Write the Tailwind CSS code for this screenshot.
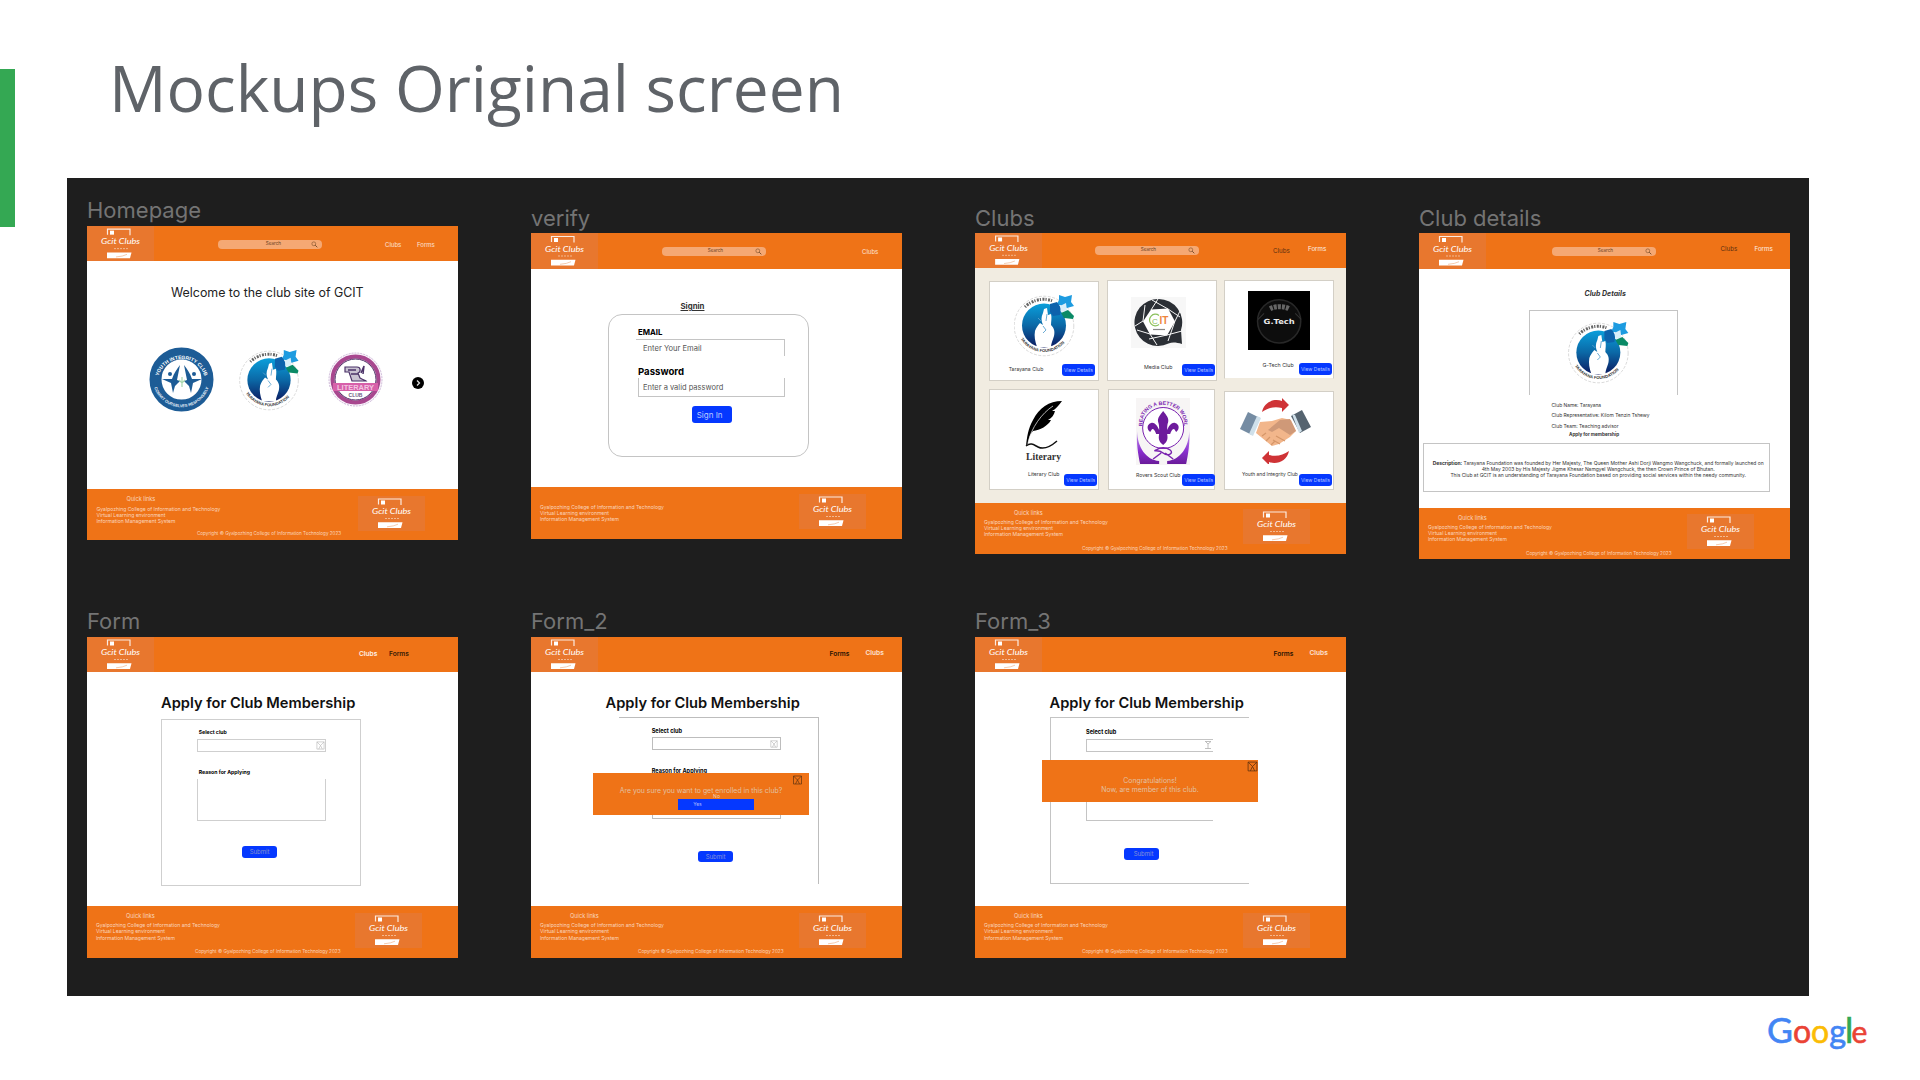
<!DOCTYPE html>
<html lang="en">
<head>
<meta charset="utf-8">
<title>Mockups Original screen</title>
<script src="https://cdn.jsdelivr.net/npm/@tailwindcss/browser@4"></script>
</head>
<body class="bg-white">
<!-- shared artwork -->
<svg class="absolute size-0" aria-hidden="true">
  <defs>
    <linearGradient id="sky" x1="0" y1="0" x2="0" y2="1"><stop offset="0" stop-color="#0a9fdb"/><stop offset=".5" stop-color="#0b68a6"/><stop offset="1" stop-color="#0b1a60"/></linearGradient>
    <linearGradient id="violet" x1="0" y1="0" x2="0" y2="1"><stop offset="0" stop-color="#c9a2ee"/><stop offset=".6" stop-color="#8a2fd0"/><stop offset="1" stop-color="#6a1b9a"/></linearGradient>
    <symbol id="brand" viewBox="0 0 67 35">
      <path d="M20.500 8.500V3H43v6" fill="none" stroke="#fff" stroke-opacity=".85" stroke-width="1.200"/>
      <rect x="23" y="4.500" width="4" height="4" fill="#fff"/>
      <text x="14" y="18" font-family="Lato" font-style="italic" font-weight="400" font-size="8.400" fill="#fff" textLength="39" lengthAdjust="spacingAndGlyphs">Gcit Clubs</text>
      <path d="M27 22.500h15" stroke="#f6c9a8" stroke-width=".8" stroke-dasharray="2 1"/>
      <path d="M20 26.300h24.500l-1.500 5.700H20z" fill="#fff"/>
      <path d="M29 30.800q7-.5 11-2.600" fill="none" stroke="#f0b58c" stroke-width=".7"/>
    </symbol>
    <symbol id="lens" viewBox="0 0 8 8"><circle cx="3.200" cy="3.200" r="2.200" fill="none" stroke="#8a5a34" stroke-width=".8"/><path d="M4.800 4.800l2.400 2.400" stroke="#6b4424" stroke-width="1"/></symbol>
    <symbol id="tarayana" viewBox="0 0 61 63">
      <circle cx="30" cy="32" r="29.800" fill="#fff" stroke="#b5b5b5" stroke-width=".5" stroke-dasharray="3 1.500"/>
      <circle cx="30" cy="31.500" r="22" fill="url(#sky)"/>
      <path d="M23 53c-2-6-3-11-2-16 1-3 3-6 5-8l3 2c-2-4-2-8 0-12l1-4 3-1 1 7 3-1c1 4 0 7 0 11 3 3 4 6 3 11-1 4-3 7-3 11z" fill="#fff"/>
      <path d="M24 24l3 3M29 32l3 4-3 3M33 20l-1 7" fill="none" stroke="#5ba3cf" stroke-width=".9"/>
      <path d="M45 1l6 2 7-2-1 7 3 4-7 2-7-3-4 1 3-6z" fill="#1d9be0"/>
      <path d="M36 10l7-2 4 6-1 7-7 1-3-4z" fill="#0d62ac"/>
      <path d="M46 12l6-3 1 8-6 1z" fill="#d9eefa"/>
      <path d="M47 19l7-3 6 6-1 3-9-1z" fill="#0a8a66"/>
      <path id="tb" d="M6.500 45a27.500 27.500 0 0 0 48-2" fill="none"/>
      <text font-family="Liberation Sans" font-weight="700" font-size="4.200" fill="#333"><textPath href="#tb">TARAYANA FOUNDATION</textPath></text>
      <path d="M11 13A26.500 26.500 0 0 1 39 7" fill="none" stroke="#666" stroke-width="3" stroke-dasharray="1.200 1.400 2 1"/>
    </symbol>
    <symbol id="mail" viewBox="0 0 10 10"><path d="M1 1h8v8H1zM1 1l4 4 4-4M3 9l2-4 2 4" fill="none" stroke="currentColor" stroke-width=".7"/></symbol>
  </defs>
</svg>

<div class="flex h-[1080px] w-[1920px] flex-col overflow-hidden">
  <header class="flex h-[178px] shrink-0 items-start">
    <div class="mt-[69px] h-[158px] w-[15px] shrink-0 bg-[#34a853]"></div>
    <h1 class="ml-[94px] mt-[44px] whitespace-nowrap font-['Open_Sans'] text-[64px] leading-[88px] text-[#5f6368]">Mockups Original screen</h1>
  </header>

  <!-- design canvas with free-placed artboards -->
  <main class="relative ml-[67px] h-[817.5px] w-[1741.5px] shrink-0 overflow-hidden bg-[#1e1e1e] font-['Inter'] text-black">

    <!-- Homepage -->
    <section class="absolute left-[20px] top-[21px] w-[371px] whitespace-nowrap">
      <h2 class="h-[27px] text-[22px] leading-[22px] text-[#747474]">Homepage</h2>
      <div class="flex h-[35.3px] items-center bg-[#ef7317] text-[6px] text-white/80">
        <svg class="h-full w-[67px] shrink-0 bg-[#e8772e]"><use href="#brand"/></svg>
        <div class="ml-[64px] mt-[2px] flex h-[9.5px] w-[104px] items-center justify-end rounded-[4px] bg-[#f5a873] pr-[4px] text-[4.6px] text-[#6b4424]"><span class="mr-[30px]">Search</span><svg class="size-[7px]"><use href="#lens"/></svg></div>
        <span class="ml-[63px] mt-[2px] w-[18px]">Clubs</span><span class="ml-[14px] mt-[2px]">Forms</span>
      </div>
      <div class="flex h-[228px] flex-col bg-white">
        <h3 class="ml-[84px] mt-[24px] text-[12.4px] leading-[16px] text-[#222]">Welcome to the club site of GCIT</h3>
        <div class="ml-[62px] mt-[46px] flex items-center">
          <svg class="size-[65px]" viewBox="0 0 65 65">
            <circle cx="32.500" cy="32.500" r="26" fill="#fff" stroke="#1d5c96" stroke-width="12"/>
            <path id="ya" d="M8.500 36a24 24 0 1 1 48 0" fill="none"/><path id="yb" d="M4.500 37a28.500 28.500 0 0 0 56 0" fill="none"/>
            <text font-family="Liberation Sans" font-weight="700" font-size="5" fill="#fff"><textPath href="#ya" startOffset="50%" text-anchor="middle">YOUTH INTEGRITY CLUB</textPath></text>
            <text font-family="Liberation Sans" font-weight="700" font-size="4" fill="#e4edf6"><textPath href="#yb" startOffset="50%" text-anchor="middle">COMMIT OURSELVES RESPONSIBLY</textPath></text>
            <path d="M31 18c-3 4-6 8-8 14l-10 0 9 4 2 10 2-7 5-5-3-1zM35 18c3 4 6 8 8 14l10 0-9 4-2 10-2-7-5-5 3-1z" fill="#1d5c96"/>
            <circle cx="21" cy="27" r="2" fill="#1d5c96"/><circle cx="45" cy="27" r="2" fill="#1d5c96"/>
            <path d="M33 30v10M30 33l3 3 3-3" stroke="#a8d8ae" stroke-width="1.200" fill="none"/>
          </svg>
          <svg class="ml-[25px] h-[62px] w-[61px]"><use href="#tarayana"/></svg>
          <svg class="ml-[28px] size-[55px]" viewBox="0 0 55 55">
            <circle cx="27.500" cy="27.500" r="26.500" fill="#faf5fb" stroke="#cdb8d8" stroke-width="1" stroke-dasharray="2 1"/>
            <circle cx="27.500" cy="27.500" r="23" fill="#fff" stroke="#a8478f" stroke-width="4"/>
            <circle cx="27.500" cy="27.500" r="20.500" fill="none" stroke="#4d2c63" stroke-width="1"/>
            <path d="M17 15h12c4 0 4 5 1 6l2 5c3 2 5 2 6 3H24l-3-9h-4z" fill="#c9c2d2" stroke="#4b3268" stroke-width="1.200"/><path d="M33 21l3-7-1 8M20 18h8M23 22h7" fill="none" stroke="#4b3268" stroke-width="1.500"/>
            <path d="M5 31h45v8H5z" fill="#d760a9"/>
            <text x="27.500" y="38" text-anchor="middle" font-family="Liberation Sans" font-weight="700" font-size="8" fill="#f3c4e1" textLength="37" lengthAdjust="spacingAndGlyphs">LITERARY</text>
            <text x="27.500" y="45" text-anchor="middle" font-family="Liberation Sans" font-weight="700" font-size="5" fill="#6e5a80">CLUB</text>
          </svg>
          <svg class="ml-[28.500px] mt-[7px] size-[12px]" viewBox="0 0 12 12"><circle cx="6" cy="6" r="6"/><path d="M5 3.500L7.500 6 5 8.500" fill="none" stroke="#ddd" stroke-width="1.300"/></svg>
        </div>
      </div>
      <div class="h-[51px] bg-[#ef7317] text-[5.05px] leading-[6.2px] text-white/70">
        <div class="flex h-[42px] items-start">
          <div class="w-[271px] pl-[9.500px] pt-[7px]"><p class="ml-[30px] pb-[3px] text-[5.6px]">Quick links</p><p>Gyalpozhing College of Information and Technology</p><p>Virtual Learning environment</p><p>Information Management System</p></div>
          <svg class="mt-[6.500px] h-[35px] w-[67px] bg-[#e8772e]"><use href="#brand"/></svg>
        </div>
        <p class="ml-[110px] text-[4.6px]">Copyright © Gyalpozhing College of Information Technology 2023</p>
      </div>
    </section>

    <!-- verify -->
    <section class="absolute left-[464px] top-[29px] w-[370.7px] whitespace-nowrap">
      <h2 class="h-[26px] text-[22px] leading-[22px] text-[#747474]">verify</h2>
      <div class="flex h-[36px] items-center bg-[#ef7317] text-[6px] text-white/80">
        <svg class="h-full w-[67px] shrink-0 bg-[#e8772e]"><use href="#brand"/></svg>
        <div class="ml-[64px] mt-px flex h-[9.5px] w-[104px] items-center justify-end rounded-[4px] bg-[#f5a873] pr-[4px] text-[4.6px] text-[#6b4424]"><span class="mr-[32px]">Search</span><svg class="size-[7px]"><use href="#lens"/></svg></div>
        <span class="ml-[96px]">Clubs</span>
      </div>
      <div class="flex h-[218px] flex-col bg-white">
        <h3 class="ml-[149.500px] mt-[32px] text-[7.8px] font-bold leading-[10px] text-[#333] underline">Signin</h3>
        <div class="ml-[77px] mt-[3px] flex h-[143px] w-[201px] flex-col items-start rounded-[14px] border border-[#c4c4c4]">
          <p class="ml-[29px] mt-[13px] text-[7.8px] font-bold leading-[8px]">EMAIL</p>
          <div class="ml-[27px] mt-[3px] flex h-[17px] w-[149px] items-center border-r border-t border-[#c4c4c4] pl-[7px] pt-[2px] text-[7.6px] text-[#555]">Enter Your Email</div>
          <p class="ml-[29px] mt-[11px] text-[9.6px] font-bold leading-[10px]">Password</p>
          <div class="ml-[29px] mt-[1px] flex h-[19px] w-[147px] items-center border-x border-b border-[#c4c4c4] pl-[4px] pt-px text-[7.5px] text-[#555]">Enter a valid password</div>
          <div class="ml-[82.700px] mt-[9px] flex h-[17px] w-[40.5px] items-center rounded-[3px] bg-[#0538ff] pl-[5px] text-[8px] text-[#bccaff]">Sign In</div>
        </div>
      </div>
      <div class="h-[52.300px] bg-[#ef7317] text-[5.05px] leading-[6.2px] text-white/70">
        <div class="flex items-start">
          <div class="w-[268px] pl-[9px] pt-[16.500px]"><p>Gyalpozhing College of Information and Technology</p><p>Virtual Learning environment</p><p>Information Management System</p></div>
          <svg class="mt-[6.500px] h-[35px] w-[67px] bg-[#e8772e]"><use href="#brand"/></svg>
        </div>
      </div>
    </section>

    <!-- Clubs -->
    <section class="absolute left-[908px] top-[29px] w-[371px] whitespace-nowrap">
      <h2 class="h-[26.300px] text-[22px] leading-[22px] text-[#747474]">Clubs</h2>
      <div class="flex h-[34.700px] items-center bg-[#ef7317] text-[6.2px] text-white/90">
        <svg class="h-full w-[67px] shrink-0 bg-[#e8772e]"><use href="#brand"/></svg>
        <div class="ml-[53px] flex h-[9.5px] w-[104px] items-center justify-end rounded-[4px] bg-[#f5a873] pr-[4px] text-[4.6px] text-[#6b4424]"><span class="mr-[32px]">Search</span><svg class="size-[7px]"><use href="#lens"/></svg></div>
        <span class="ml-[74px] w-[19px] text-[#5c2f10]">Clubs</span><span class="ml-[16px] pb-[3px]">Forms</span>
      </div>
      <div class="flex h-[234.700px] flex-col bg-[#f1ece1] pl-[13.700px] pt-[12.300px] text-[5px] leading-[6px] text-[#333]">
        <div class="flex h-[108.700px] items-start">
          <div class="mt-[1px] h-[100px] w-[110px] border border-[#d3cfc6] bg-white">
            <svg class="ml-[24.300px] mt-[11.300px] h-[63px] w-[61px]"><use href="#tarayana"/></svg>
            <div class="mt-[7.300px] flex items-start"><span class="ml-[19px] mt-[2.500px] w-[34px] text-[5.100px]">Tarayana Club</span><span class="ml-[19px] h-[12px] w-[33.500px] shrink-0 rounded-[3px] bg-[#0538ff] text-center leading-[13px] text-[#b4c3ff]">View Details</span></div>
          </div>
          <div class="ml-[8px] h-[101px] w-[110.600px] border border-[#d3cfc6] bg-white">
            <svg class="ml-[23px] mt-[15.400px] h-[51px] w-[55px] bg-[#f7f7f7]" viewBox="0 0 55 51">
              <path d="M27.500 2a23.500 23.500 0 1 0 10 44.500c4-1.500 8-1 13.500.5l-1-14A23.500 23.500 0 0 0 27.500 2z" fill="#2b2f35"/>
              <path d="M20 12.500l17-1 7 13-8 14-17-1-7-13z" fill="#fff"/>
              <path d="M20 13l7-11M37 12l12 8M44 24l-7 20M36 38l-18 4M19 37L6 33M12 24L14 8M37 12L21 3M44 24l6-12M36 38l15-4M19 37l7 11M12 24L4 29" stroke="#f7f7f7" stroke-width="1"/>
              <path d="M28 18.500a5.800 5.800 0 1 0 0 9" fill="none" stroke="#8ac05b" stroke-width="1.200"/>
              <text x="21" y="26.500" font-family="Liberation Sans" font-size="8" fill="#8ac05b">C</text>
              <text x="28.500" y="27" font-family="Liberation Sans" font-weight="700" font-size="10" fill="#ee8540">IT</text>
              <path d="M22 32.500h12" stroke="#888" stroke-width="1.200"/>
            </svg>
            <div class="mt-[16.600px] flex items-start"><span class="ml-[36.300px] w-[28px] text-[5.3px]">Media Club</span><span class="ml-[10px] h-[12px] w-[33.500px] shrink-0 rounded-[3px] bg-[#0538ff] text-center leading-[13px] text-[#b4c3ff]">View Details</span></div>
          </div>
          <div class="ml-[7px] h-[99px] w-[109.700px] border border-[#d3cfc6] border-b-[#f1ece1] bg-white">
            <svg class="ml-[22.400px] mt-[9.700px] h-[58.700px] w-[62.300px] bg-black" viewBox="0 0 62 58">
              <circle cx="31" cy="30" r="21.500" fill="#0d0d0d" stroke="#282828" stroke-width="1.500"/>
              <path d="M22 17.500a14 8 0 0 1 19 0" fill="none" stroke="#666" stroke-width="5" stroke-dasharray="3 1"/>
              <path d="M16 22l-6 6M47 22l6 6" stroke="#333"/>
              <text x="31" y="33" text-anchor="middle" font-family="DejaVu Sans" font-weight="700" font-size="7" fill="#e8e8e8" textLength="31" lengthAdjust="spacingAndGlyphs">G.Tech</text>
            </svg>
            <div class="mt-[13px] flex items-start"><span class="-mt-[1px] ml-[37.200px] w-[30px] text-[5.3px]">G-Tech Club</span><span class="ml-[6.200px] h-[12px] w-[33.500px] shrink-0 rounded-[3px] bg-[#0538ff] text-center leading-[13px] text-[#b4c3ff]">View Details</span></div>
          </div>
        </div>
        <div class="flex items-start">
          <div class="h-[100.600px] w-[110px] border border-[#d3cfc6] bg-white">
            <svg class="ml-[35.300px] mt-[10px] h-[64px] w-[38px] overflow-visible" viewBox="0 0 38 64">
              <path d="M37 1C24 1 14 8 8 20 3 29 2 37 1 46l2-3c1-5 2-9 5-12 7-1 15-5 18-11l-3 0c4-2 6-5 7-9l-3 0c4-2 7-6 10-10z" fill="#000"/>
              <path d="M3 43C6 28 17 13 28 6" fill="none" stroke="#fff" stroke-width=".7"/>
              <path d="M1 46c5-4 8-1 12 1s11 1 19-6" fill="none" stroke="#111" stroke-width="1.500"/>
              <text x="1" y="60" font-family="Liberation Serif" font-weight="700" font-size="11" fill="#333" textLength="35" lengthAdjust="spacingAndGlyphs">Literary</text>
            </svg>
            <div class="mt-[10.300px] flex items-start"><span class="-mt-[3.600px] ml-[38.300px] w-[32px] text-[5.2px]">Literary Club</span><span class="ml-[4px] h-[12px] w-[33.500px] shrink-0 rounded-[3px] bg-[#0538ff] text-center leading-[13px] text-[#b4c3ff]">View Details</span></div>
          </div>
          <div class="ml-[9.600px] h-[100.600px] w-[107px] border border-[#d3cfc6] bg-white">
            <svg class="ml-[26.400px] mt-[8.300px] h-[67px] w-[54.300px] overflow-visible bg-[#f7f5f5]" viewBox="0 0 54 67">
              <path id="sc" d="M6.500 29C3-.500 51-.500 47.500 29" fill="none"/>
              <text font-family="Liberation Sans" font-weight="700" font-size="5.200" fill="#7a22b0"><textPath href="#sc" startOffset="50%" text-anchor="middle">CREATING A BETTER WORLD</textPath></text>
              <path d="M1 33c0 16 9 29 22 30v3H4C2 57 0 44 1 33zM53 33c0 16-9 29-22 30v3h19c2-9 4-22 3-33z" fill="url(#violet)"/>
              <circle cx="27" cy="30" r="20.500" fill="#fff" stroke="#7a22b0" stroke-width="1"/>
              <path d="M27 13c3 4 6 7 5 11-1 3-1 5-1 8 2-5 5-8 8-7 4 1 5 6 1 9l-2-3c-2 0-3 2-4 5h-3c1 5 0 8-4 11-4-3-5-6-4-11h-3c-1-3-2-5-4-5l-2 3c-4-3-3-8 1-9 3-1 6 2 8 7 0-3 0-5-1-8-1-4 2-7 5-11z" fill="#6d1b9c"/>
              <path d="M20 52c4-3 10-3 14 0s-2 7-7 3-11-1-7-3zM17 61l8-6M37 61l-8-6" fill="none" stroke="#7a22b0" stroke-width="1.500"/>
            </svg>
            <div class="mt-[9px] flex items-start"><span class="-mt-[2.300px] ml-[26.700px] w-[43px] text-[5.100px]">Rovers Scout Club</span><span class="ml-[3px] h-[12px] w-[33.500px] shrink-0 rounded-[3px] bg-[#0538ff] text-center leading-[13px] text-[#b4c3ff]">View Details</span></div>
          </div>
          <div class="ml-[9px] mt-[1.700px] h-[99px] w-[109.500px] border border-[#d3cfc6] bg-white">
            <svg class="ml-[14.700px] mt-[6px] h-[66.600px] w-[70.700px]" viewBox="0 0 70.700 66.600">
              <path d="M22 14C24 4 34 0 42 3l0-3 7 7-7 7v-4c-8-2-14 0-20 4z" fill="#cf3336"/>
              <path d="M49 53c-2 10-12 14-20 11v3l-7-7 7-7v4c8 2 14 0 20-4z" fill="#cf3336"/>
              <path d="M8 14l12 6-8 17-12-6z" fill="#758ca3"/><path d="M17 18l4 2-8 18-4-2z" fill="#cfe0ea"/>
              <path d="M62 12l9 17-11 6-9-17z" fill="#55636f"/><path d="M52 16l3 1 7 16-3 2z" fill="#cfe0ea"/>
              <path d="M20 24l12-1 10-3 9 2 5 11-6 6-11 7-7 2-16-13z" fill="#f2b68b"/>
              <path d="M28 32l12-10 10-1 6 12-6 4-11-7-7 4z" fill="#cf9978"/>
              <path d="M22 38l4-3M26 43l4-4M31 47l4-4M36 38l9 5M33 42l7 4" stroke="#d59669" stroke-width="1.200"/>
            </svg>
            <div class="mt-[10px] flex items-start"><span class="-mt-[3.600px] ml-[16.700px] w-[56px] text-[4.9px]">Youth and Integrity Club</span><span class="ml-[.7px] h-[12px] w-[33.500px] shrink-0 rounded-[3px] bg-[#0538ff] text-center leading-[13px] text-[#b4c3ff]">View Details</span></div>
          </div>
        </div>
      </div>
      <div class="h-[51.300px] bg-[#ef7317] text-[5.05px] leading-[6.2px] text-white/70">
        <div class="flex h-[42px] items-start">
          <div class="w-[268px] pl-[9px] pt-[7px]"><p class="ml-[30px] pb-[3px] text-[5.6px]">Quick links</p><p>Gyalpozhing College of Information and Technology</p><p>Virtual Learning environment</p><p>Information Management System</p></div>
          <svg class="mt-[6.500px] h-[35px] w-[67px] bg-[#e8772e]"><use href="#brand"/></svg>
        </div>
        <p class="ml-[107px] text-[4.65px]">Copyright © Gyalpozhing College of Information Technology 2023</p>
      </div>
    </section>

    <!-- Club details -->
    <section class="absolute left-[1352px] top-[29px] w-[371px] whitespace-nowrap">
      <h2 class="h-[26.300px] text-[22px] leading-[22px] text-[#747474]">Club details</h2>
      <div class="flex h-[36px] items-center bg-[#ef7317] text-[6.2px] text-white/90">
        <svg class="h-full w-[67px] shrink-0 bg-[#e8772e]"><use href="#brand"/></svg>
        <div class="ml-[66px] flex h-[9.5px] w-[104px] items-center justify-end rounded-[4px] bg-[#f5a873] pr-[4px] text-[4.6px] text-[#6b4424]"><span class="mr-[32px]">Search</span><svg class="size-[7px]"><use href="#lens"/></svg></div>
        <span class="ml-[64.500px] w-[19px] pb-[5px] text-[#5c2f10]">Clubs</span><span class="ml-[15px] pb-[5px]">Forms</span>
      </div>
      <div class="flex h-[238.300px] flex-col items-start bg-white text-[#333]">
        <h3 class="ml-[165.500px] mt-[20.300px] text-[7px] font-bold italic leading-[8px]">Club Details</h3>
        <div class="ml-[110px] mt-[12.700px] h-[85px] w-[149.300px] border-x border-t border-[#c4c4c4]"><svg class="ml-[38.300px] mt-[9.300px] h-[63px] w-[61.700px]"><use href="#tarayana"/></svg></div>
        <div class="ml-[132.500px] mt-[4.400px] text-[4.9px] leading-[10.6px]"><p>Club Name: Tarayana</p><p>Club Representative: Kilom Tenzin Tshewy</p><p>Club Team: Teaching advisor</p></div>
        <p class="ml-[150px] mt-[1px] text-[4.6px] font-bold leading-[6px]">Apply for membership</p>
        <div class="ml-[4px] mt-[4.300px] flex h-[49.300px] w-[347.300px] flex-col items-center justify-center border border-[#c4c4c4] pl-[3px] pt-[4px] text-[4.94px] leading-[6px]">
          <p><b>Description:</b> Tarayana Foundation was founded by Her Majesty, The Queen Mother Ashi Dorji Wangmo Wangchuck, and formally launched on</p>
          <p>4th May 2003 by His Majesty Jigme Khesar Namgyel Wangchuck, the then Crown Prince of Bhutan.</p>
          <p>This Club at GCIT is an understanding of Tarayana Foundation based on providing social services within the needy community.</p>
        </div>
      </div>
      <div class="h-[51.300px] bg-[#ef7317] text-[5.05px] leading-[6.2px] text-white/70">
        <div class="flex h-[42px] items-start">
          <div class="w-[268px] pl-[9px] pt-[7px]"><p class="ml-[30px] pb-[3px] text-[5.6px]">Quick links</p><p>Gyalpozhing College of Information and Technology</p><p>Virtual Learning environment</p><p>Information Management System</p></div>
          <svg class="mt-[6.500px] h-[35px] w-[67px] bg-[#e8772e]"><use href="#brand"/></svg>
        </div>
        <p class="ml-[107px] text-[4.65px]">Copyright © Gyalpozhing College of Information Technology 2023</p>
      </div>
    </section>

    <!-- Form -->
    <section class="absolute left-[20px] top-[432px] w-[371px] whitespace-nowrap">
      <h2 class="h-[27px] text-[22px] leading-[22px] text-[#747474]">Form</h2>
      <div class="flex h-[35px] items-center bg-[#ef7317] text-[6.6px] font-semibold text-white/90">
        <svg class="h-full w-[67px] shrink-0 bg-[#e8772e]"><use href="#brand"/></svg>
        <span class="ml-[205px] w-[19px]">Clubs</span><span class="ml-[11px] text-[#3a1c05]">Forms</span>
      </div>
      <div class="flex h-[234px] flex-col bg-white">
        <h3 class="ml-[74px] mt-[22.500px] text-[14.65px] font-semibold leading-[16px] text-[#111]">Apply for Club Membership</h3>
        <div class="ml-[74px] mt-[8px] flex h-[167.500px] w-[199.500px] flex-col items-start border border-[#cfcfcf] text-[5.2px] font-bold leading-[6px]">
          <p class="ml-[36.700px] mt-[9px]">Select club</p>
          <div class="ml-[34.700px] mt-[4.300px] flex h-[13px] w-[129.700px] items-center justify-end border border-[#cfcfcf] text-[#b9b9b9]"><svg class="size-[9px]"><use href="#mail"/></svg></div>
          <p class="ml-[36.700px] mt-[17px]">Reason for Applying</p>
          <div class="ml-[34.700px] mt-[4px] h-[42.700px] w-[129.700px] border-x border-b border-[#cfcfcf]"></div>
          <div class="ml-[80px] mt-[25px] flex h-[11.600px] w-[35px] items-center justify-center rounded-[3px] bg-[#0538ff] text-[6px] font-normal text-[#8593c9]">Submit</div>
        </div>
      </div>
      <div class="h-[51.700px] bg-[#ef7317] text-[5.05px] leading-[6.2px] text-white/70">
        <div class="flex h-[42px] items-start">
          <div class="w-[268px] pl-[9px] pt-[7px]"><p class="ml-[30px] pb-[3px] text-[5.6px]">Quick links</p><p>Gyalpozhing College of Information and Technology</p><p>Virtual Learning environment</p><p>Information Management System</p></div>
          <svg class="mt-[6.500px] h-[35px] w-[67px] bg-[#e8772e]"><use href="#brand"/></svg>
        </div>
        <p class="ml-[108px] text-[4.65px]">Copyright © Gyalpozhing College of Information Technology 2023</p>
      </div>
    </section>

    <!-- Form_2 -->
    <section class="absolute left-[464px] top-[432px] w-[370.7px] whitespace-nowrap">
      <h2 class="h-[27px] text-[22px] leading-[22px] text-[#747474]">Form_2</h2>
      <div class="flex h-[35px] items-center bg-[#ef7317] text-[6.6px] font-semibold text-white/80">
        <svg class="h-full w-[67px] shrink-0 bg-[#e8772e]"><use href="#brand"/></svg>
        <span class="ml-[231.500px] w-[20px] text-[#2a1403]">Forms</span><span class="ml-[16px] pb-[2px]">Clubs</span>
      </div>
      <div class="relative flex h-[234px] flex-col bg-white">
        <h3 class="ml-[74.500px] mt-[22.500px] text-[14.65px] font-semibold leading-[16px] text-[#111]">Apply for Club Membership</h3>
        <div class="ml-[88px] mt-[6.500px] flex h-[166.700px] w-[199.700px] flex-col items-start border-r border-t border-[#bdbdbd] text-[5.6px] font-bold leading-[6px]">
          <p class="ml-[32.700px] mt-[10px]">Select club</p>
          <div class="ml-[32.700px] mt-[3.300px] flex h-[13px] w-[129px] items-center justify-end border border-[#bdbdbd] pr-[2px] text-[#b0b0b0]"><svg class="size-[8px]"><use href="#mail"/></svg></div>
          <p class="ml-[32.700px] mt-[17.500px]">Reason for Applying</p>
          <div class="ml-[32.700px] mt-[4px] h-[41.700px] w-[129px] border-x border-b border-[#bdbdbd]"></div>
          <div class="ml-[79px] mt-[31.300px] flex h-[11.600px] w-[35px] items-center justify-center rounded-[3px] bg-[#0538ff] text-[6px] font-normal text-[#8593d9]">Submit</div>
        </div>
        <div class="absolute left-[62px] top-[101px] flex h-[42px] w-[216px] flex-col items-center bg-[#ef7317]">
          <svg class="mr-[6px] mt-[2px] h-[10px] w-[11px] shrink-0 self-end text-[#5e3210]"><use href="#mail"/></svg>
          <p class="mt-[2px] text-[6.9px] leading-[8px] text-[#e3c0a2]">Are you sure you want to get enrolled in this club?</p>
          <p class="ml-[31px] text-[5px] leading-[3.700px] text-[#f0d3bb]">No</p>
          <div class="ml-[30px] h-[11.300px] w-[75.700px] shrink-0 bg-[#0538ff] pl-[15px] text-[5px] leading-[11.300px] text-[#a9b8ff]">Yes</div>
        </div>
      </div>
      <div class="h-[51.700px] bg-[#ef7317] text-[5.05px] leading-[6.2px] text-white/70">
        <div class="flex h-[42px] items-start">
          <div class="w-[268px] pl-[9px] pt-[7px]"><p class="ml-[30px] pb-[3px] text-[5.6px]">Quick links</p><p>Gyalpozhing College of Information and Technology</p><p>Virtual Learning environment</p><p>Information Management System</p></div>
          <svg class="mt-[6.500px] h-[35px] w-[67px] bg-[#e8772e]"><use href="#brand"/></svg>
        </div>
        <p class="ml-[107px] text-[4.65px]">Copyright © Gyalpozhing College of Information Technology 2023</p>
      </div>
    </section>

    <!-- Form_3 -->
    <section class="absolute left-[908px] top-[432px] w-[371px] whitespace-nowrap">
      <h2 class="h-[27px] text-[22px] leading-[22px] text-[#747474]">Form_3</h2>
      <div class="flex h-[35px] items-center bg-[#ef7317] text-[6.6px] font-semibold text-white/80">
        <svg class="h-full w-[67px] shrink-0 bg-[#e8772e]"><use href="#brand"/></svg>
        <span class="ml-[231.500px] w-[20px] text-[#2a1403]">Forms</span><span class="ml-[16px] pb-[2px]">Clubs</span>
      </div>
      <div class="relative flex h-[234px] flex-col bg-white">
        <h3 class="ml-[74.500px] mt-[22.500px] text-[14.65px] font-semibold leading-[16px] text-[#111]">Apply for Club Membership</h3>
        <div class="ml-[75px] mt-[6.500px] flex h-[167px] w-[198.700px] flex-col items-start border-y border-l border-[#c4c4c4] text-[5.6px] font-bold leading-[6px]">
          <p class="ml-[35px] mt-[10.700px]">Select club</p>
          <div class="ml-[35px] mt-[4.300px] flex h-[13px] w-[127.400px] items-center justify-end border-y border-l border-[#c4c4c4] pr-px text-[#b0b0b0]"><svg class="size-[8px]" viewBox="0 0 8 8"><path d="M1 .5h6M1 7.500h6M1.500 .5L4 3l3-2.500M4 3v4.500" fill="none" stroke="currentColor" stroke-width=".8"/></svg></div>
          <div class="ml-[35px] mt-[27px] h-[42.300px] w-[127.400px] border-b border-l border-[#c4c4c4]"></div>
          <div class="ml-[73px] mt-[26.700px] flex h-[11.800px] w-[35px] items-center justify-center rounded-[3px] bg-[#0538ff] pl-[4px] text-[6px] font-normal text-[#8593d9]">Submit</div>
        </div>
        <div class="absolute left-[67px] top-[88px] flex h-[42.300px] w-[216px] flex-col items-center bg-[#ef7317] text-[6.900px] leading-[8.600px] text-[#e3c0a2]">
          <svg class="mt-[1px] h-[11px] w-[11px] shrink-0 self-end text-[#5e3210]"><use href="#mail"/></svg>
          <p class="mt-[5px]">Congratulations!</p>
          <p>Now, are member of this club.</p>
        </div>
      </div>
      <div class="h-[51.700px] bg-[#ef7317] text-[5.05px] leading-[6.2px] text-white/70">
        <div class="flex h-[42px] items-start">
          <div class="w-[268px] pl-[9px] pt-[7px]"><p class="ml-[30px] pb-[3px] text-[5.6px]">Quick links</p><p>Gyalpozhing College of Information and Technology</p><p>Virtual Learning environment</p><p>Information Management System</p></div>
          <svg class="mt-[6.500px] h-[35px] w-[67px] bg-[#e8772e]"><use href="#brand"/></svg>
        </div>
        <p class="ml-[107px] text-[4.65px]">Copyright © Gyalpozhing College of Information Technology 2023</p>
      </div>
    </section>
  </main>

  <footer class="flex flex-1 items-start justify-end pr-[50px] pt-[14px]">
    <svg class="h-[46px] w-[104px] overflow-visible" viewBox="0 0 104 46" font-family="Lato" font-weight="400" font-size="35">
      <text y="32.800" stroke-width=".6"><tspan x="1" font-size="35.500" fill="#4285f4" stroke="#4285f4">G</tspan><tspan x="27" fill="#ea4335" stroke="#ea4335" font-size="32">o</tspan><tspan x="45" fill="#fbbc05" stroke="#fbbc05" font-size="32">o</tspan><tspan x="63.300" fill="#4285f4" stroke="#4285f4" font-size="32.500">g</tspan><tspan x="79" fill="#34a853" stroke="#34a853">l</tspan><tspan x="85.500" fill="#ea4335" stroke="#ea4335" font-size="30">e</tspan></text>
    </svg>
  </footer>
</div>
</body>
</html>
